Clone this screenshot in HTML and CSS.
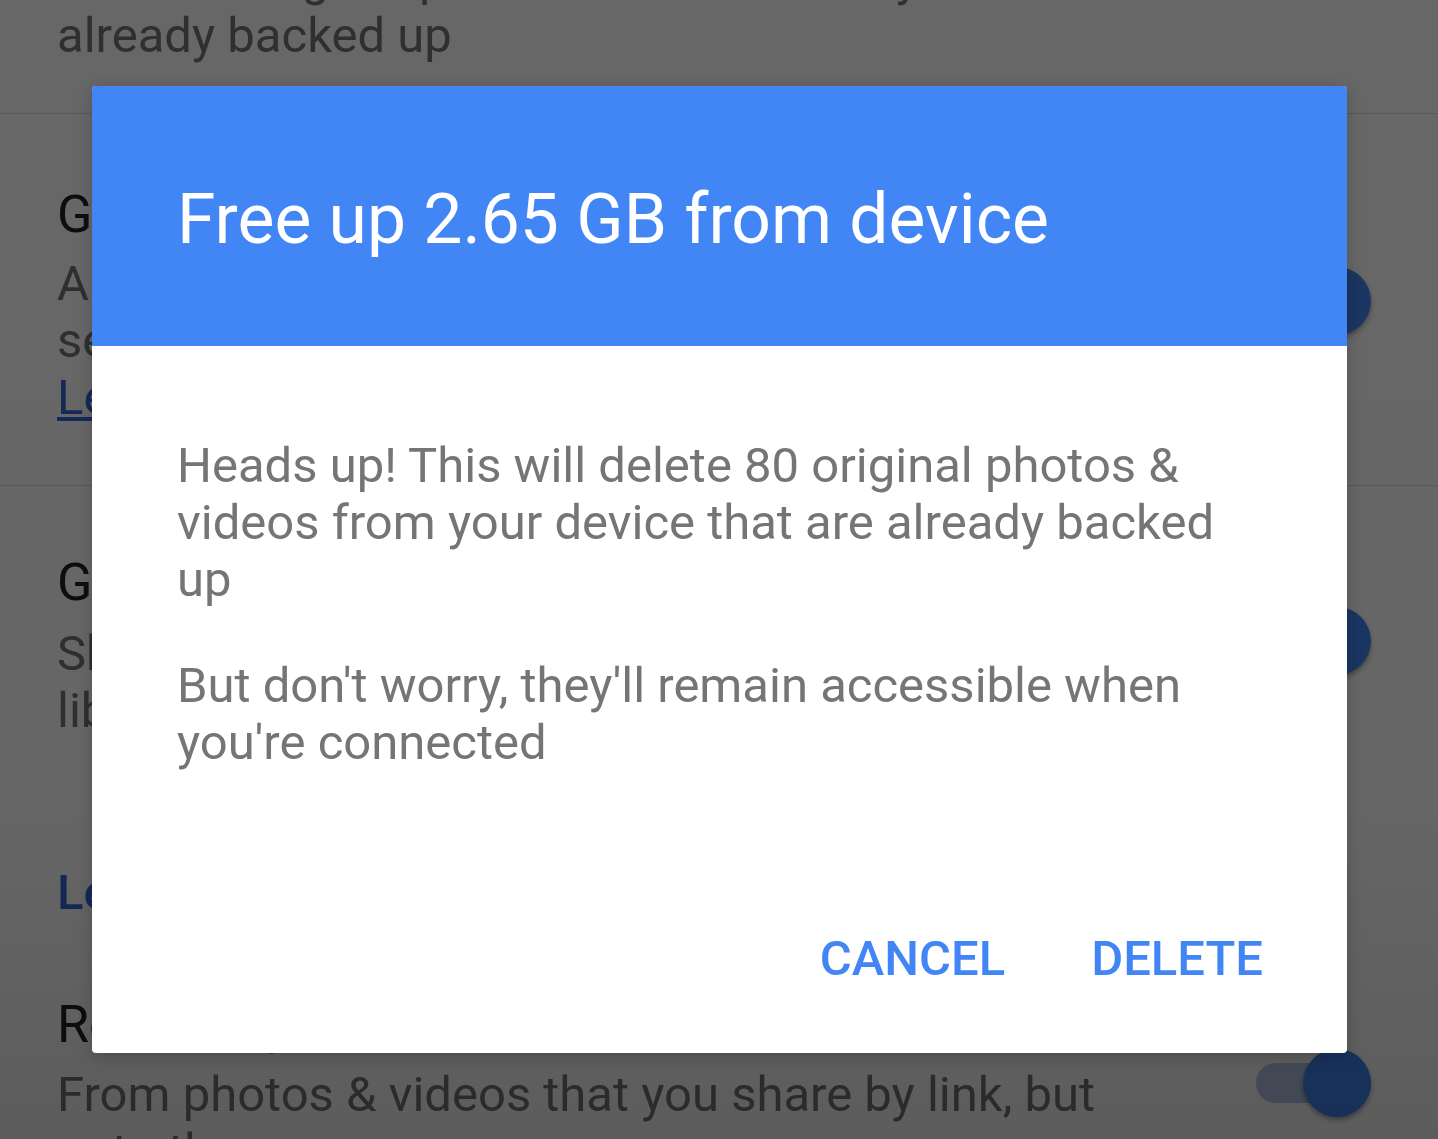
FILE: index.html
```html
<!DOCTYPE html>
<html lang="en">
<head>
<meta charset="utf-8">
<title>Free up device storage</title>
<link rel="stylesheet" href="styles.css">
</head>
<body>
<div class="screen">
  <div class="settings">
    <div class="row row-first">
      <div class="row-text">
        <div class="row-title">Free up device storage</div>
        <div class="row-sub">Remove original photos &amp; videos from your device that are<br>already backed up</div>
      </div>
    </div>
    <div class="row row-faces">
      <div class="row-text">
        <div class="row-title">Group similar faces</div>
        <div class="row-sub">Automatically group similar faces so you can<br>search for people in your photos.<br><a class="inline-link" href="#">Learn more</a></div>
      </div>
      <span class="toggle"><span class="knob"></span></span>
    </div>
    <div class="row row-drive">
      <div class="row-main">
        <div class="row-text">
          <div class="row-title">Google Drive</div>
          <div class="row-sub">Show Google Drive photos &amp; videos in your Photos<br>library</div>
        </div>
        <span class="toggle"><span class="knob"></span></span>
      </div>
      <a class="action-link" href="#">Learn more</a>
      <div class="row-main row-geo">
        <div class="row-text">
          <div class="row-title">Remove geo location</div>
          <div class="row-sub">From photos &amp; videos that you share by link, but<br>not other ways</div>
        </div>
        <span class="toggle track-visible"><span class="knob"></span></span>
      </div>
    </div>
  </div>

  <div class="scrim"></div>

  <div class="dialog" role="dialog">
    <div class="dialog-header">
      <h1 class="dialog-title">Free up 2.65 GB from device</h1>
    </div>
    <div class="dialog-body">
      <p class="dialog-text">Heads up! This will delete 80 original photos &amp; videos from your device that are already backed up</p>
      <p class="dialog-text">But don't worry, they'll remain accessible when you're connected</p>
    </div>
    <div class="dialog-actions">
      <button class="btn">CANCEL</button>
      <button class="btn">DELETE</button>
    </div>
  </div>
</div>
</body>
</html>
```

FILE: styles.css
```css
* {
  box-sizing: border-box;
}

html, body {
  margin: 0;
  padding: 0;
}

body {
  width: 1438px;
  height: 1139px;
  overflow: hidden;
  background: #ffffff;
  font-family: Roboto, "Noto Sans", "Liberation Sans", sans-serif;
}

.screen {
  position: relative;
  width: 1438px;
  height: 1139px;
  overflow: hidden;
}

/* ---------- background settings list ---------- */
.settings {
  margin-top: -182px;
}

.row {
  display: flex;
  align-items: center;
  padding: 0 67px 0 57px;
  border-bottom: 1px solid #dcdcdc;
}

.row-text {
  flex: 1;
  min-width: 0;
  padding-right: 60px;
}

.row-title {
  font-size: 52px;
  line-height: 64px;
  color: #212121;
  white-space: nowrap;
}

.row-sub {
  margin-top: 8px;
  font-size: 49px;
  line-height: 57px;
  color: #757575;
  white-space: nowrap;
}

.row-first {
  padding-top: 60px;
  padding-bottom: 49px;
}

.row-faces {
  padding-top: 69px;
  padding-bottom: 59px;
}

.inline-link {
  color: #3367d6;
  text-decoration: underline;
}

.row-drive {
  display: block;
  padding-top: 65px;
  padding-bottom: 0;
  border-bottom: none;
}

.row-main {
  display: flex;
  align-items: center;
}

.row-drive .row-sub {
  margin-top: 10px;
}

.action-link {
  display: block;
  margin-top: 125px;
  font-size: 49px;
  line-height: 57px;
  font-weight: 500;
  color: #3367d6;
  text-decoration: none;
}

.row-geo {
  margin-top: 72px;
}

.row-geo .row-sub {
  margin-top: 9px;
}

.toggle {
  position: relative;
  flex: none;
  width: 115px;
  height: 40px;
  margin-top: -8px;
  border-radius: 20px;
  background: transparent;
}

.track-visible {
  background: #b4c6e6;
}

.knob {
  position: absolute;
  right: 0;
  top: -14px;
  width: 68px;
  height: 68px;
  border-radius: 50%;
  background: #4285f4;
  box-shadow: 0 3px 5px rgba(0, 0, 0, 0.35);
}

/* ---------- scrim ---------- */
.scrim {
  position: absolute;
  inset: 0;
  background: linear-gradient(to bottom, rgba(0, 0, 0, 0.595) 0%, rgba(0, 0, 0, 0.6) 70%, rgba(0, 0, 0, 0.64) 100%);
}

/* ---------- dialog ---------- */
.dialog {
  position: absolute;
  left: 92px;
  top: 86px;
  width: 1255px;
  height: 967px;
  display: flex;
  flex-direction: column;
  background: #ffffff;
  border-radius: 4px;
  overflow: hidden;
  box-shadow: 0 4px 16px rgba(0, 0, 0, 0.2);
}

.dialog-header {
  flex: none;
  height: 260px;
  padding: 92px 85px 0;
  background: #4285f4;
}

.dialog-title {
  margin: 0;
  font-size: 69.6px;
  line-height: 82px;
  font-weight: 400;
  color: #ffffff;
  white-space: nowrap;
}

.dialog-body {
  padding: 91px 100px 0 85px;
}

.dialog-text {
  margin: 0 0 49px;
  font-size: 49px;
  line-height: 57px;
  color: #757575;
}

.dialog-actions {
  margin-top: auto;
  display: flex;
  justify-content: flex-end;
  gap: 86px;
  padding: 0 84px 66px;
}

.btn {
  padding: 0;
  border: none;
  background: none;
  font-family: inherit;
  font-size: 49px;
  line-height: 57px;
  font-weight: 500;
  color: #4285f4;
  cursor: pointer;
}
```
